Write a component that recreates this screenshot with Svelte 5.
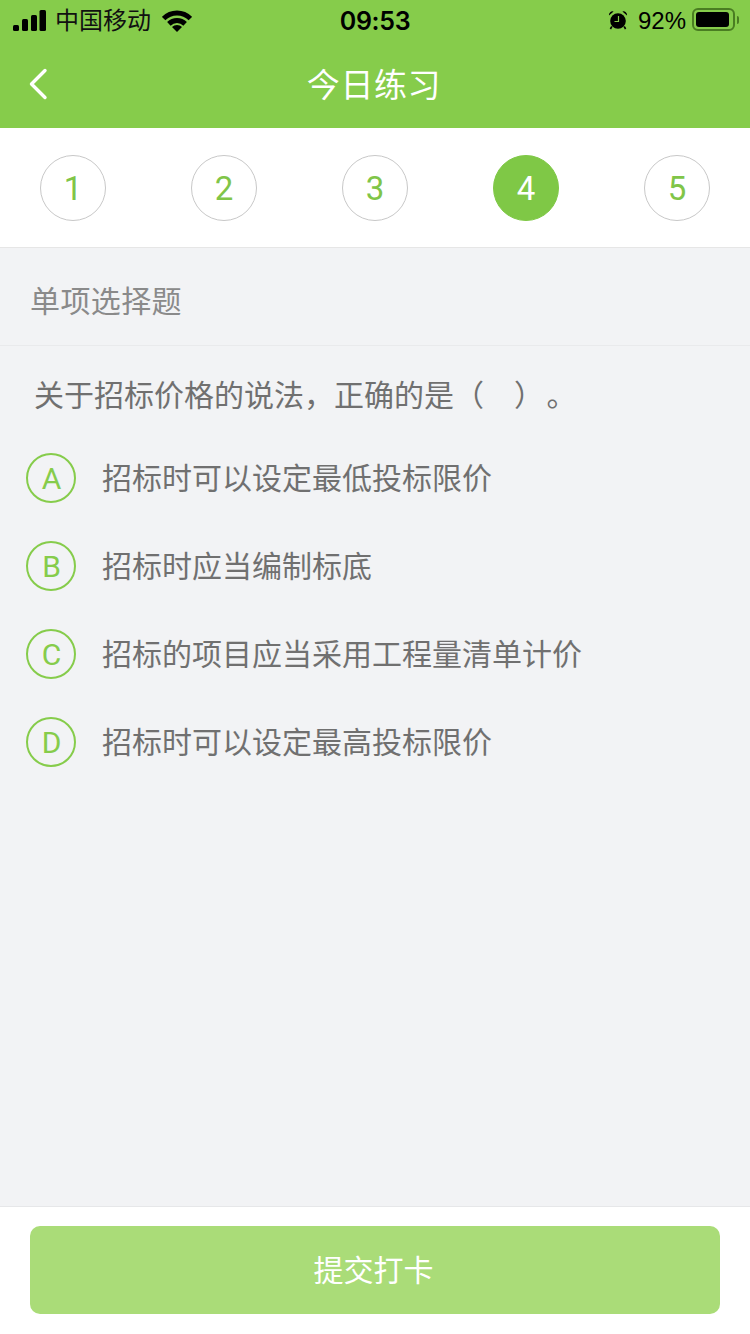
<script>
  const steps = [1, 2, 3, 4, 5];
  const current = 4;
  const options = [
    { key: 'A', text: '招标时可以设定最低投标限价' },
    { key: 'B', text: '招标时应当编制标底' },
    { key: 'C', text: '招标的项目应当采用工程量清单计价' },
    { key: 'D', text: '招标时可以设定最高投标限价' }
  ];
</script>

<div class="page">
  <header class="top">
    <div class="status">
      <div class="status-left">
        <svg class="signal" width="33" height="21" viewBox="0 0 33 21">
          <rect x="0" y="15" width="6" height="6" rx="1.5" />
          <rect x="9" y="9" width="6" height="12" rx="1.5" />
          <rect x="18" y="5" width="6" height="16" rx="1.5" />
          <rect x="26.5" y="0" width="6.5" height="21" rx="1.5" />
        </svg>
        <span class="carrier">中国移动</span>
        <svg class="wifi" width="30" height="22" viewBox="0 0 30 22">
          <path class="arc" d="M1.6 8.6A19 19 0 0 1 28.4 8.6" />
          <path class="arc" d="M6.87 13.87A11.5 11.5 0 0 1 23.13 13.87" />
          <path d="M15 22 10 17a7 7 0 0 1 10 0Z" />
        </svg>
      </div>
      <span class="time">09:53</span>
      <div class="status-right">
        <svg class="alarm" width="20" height="20" viewBox="0 0 20 20">
          <circle cx="10" cy="11" r="7.8" />
          <path d="M1 5.5a3.6 3.6 0 0 1 4.6-4ZM19 5.5a3.6 3.6 0 0 0-4.6-4Z" />
          <path d="M3.8 16.5 2.4 19M16.2 16.5l1.4 2.5" stroke="#000" stroke-width="1.6" />
          <path d="M10.5 6v5.5H6.5" fill="none" stroke="#86cc4b" stroke-width="1.2" />
        </svg>
        <span class="pct">92%</span>
        <div class="battery">
          <div class="battery-fill"></div>
        </div>
        <div class="battery-cap"></div>
      </div>
    </div>
    <div class="nav">
      <svg class="back" width="20" height="32" viewBox="0 0 20 32">
        <path d="M17 2.5 3.5 16 17 29.5" fill="none" stroke="#fff" stroke-width="3.4" stroke-linecap="round" stroke-linejoin="round" />
      </svg>
      <h1>今日练习</h1>
    </div>
  </header>

  <div class="steps">
    {#each steps as n}
      <div class="step {n === current ? 'active' : ''}">{n}</div>
    {/each}
  </div>

  <div class="type">单项选择题</div>

  <main class="question">
    <p class="stem">关于招标价格的说法，正确的是（&emsp;）&#8202;。</p>
    {#each options as opt}
      <div class="option">
        <span class="key">{opt.key}</span>
        <span class="text">{opt.text}</span>
      </div>
    {/each}
  </main>

  <footer class="bottom">
    <button class="submit">提交打卡</button>
  </footer>
</div>

<style>
  :global(body) {
    margin: 0;
    background: #f2f3f5;
  }

  .page {
    display: flex;
    flex-direction: column;
    height: 1334px;
    font-family: "Liberation Sans", "Noto Sans CJK SC", sans-serif;
    background: #f2f3f5;
    overflow: hidden;
    text-spacing-trim: space-all;
  }

  .top {
    height: 128px;
    background: #86cc4b;
    flex-shrink: 0;
  }

  .status {
    display: grid;
    grid-template-columns: 1fr auto 1fr;
    align-items: center;
    height: 41px;
    padding: 0 11px 0 13px;
    color: #000;
  }

  .status-left {
    display: flex;
    align-items: center;
  }

  .signal rect,
  .wifi path {
    fill: #000;
  }

  .wifi .arc {
    fill: none;
    stroke: #000;
    stroke-width: 5;
  }

  .carrier {
    margin-left: 9px;
    font-size: 24px;
    line-height: 40px;
    color: #111;
  }

  .wifi {
    margin-left: 11px;
  }

  .time {
    margin-left: -2px;
    font-size: 25px;
    letter-spacing: -0.3px;
    font-family: "Inter", "Liberation Sans", sans-serif;
    font-weight: 600;
  }

  .status-right {
    display: flex;
    align-items: center;
    justify-content: flex-end;
  }

  .alarm {
    fill: #000;
    margin-right: 10px;
    margin-top: -2px;
  }

  .pct {
    font-size: 24px;
    margin-right: 6px;
  }

  .battery {
    box-sizing: border-box;
    width: 43px;
    height: 23px;
    padding: 2px;
    border: 2px solid #4a7d22;
    border-radius: 6px;
    margin-top: -2px;
  }

  .battery-fill {
    width: 33px;
    height: 100%;
    background: #000;
    border-radius: 3px;
  }

  .battery-cap {
    width: 2px;
    height: 8px;
    margin-left: 2px;
    margin-top: -2px;
    background: #4a7d22;
    border-radius: 0 2px 2px 0;
  }

  .nav {
    position: relative;
    display: flex;
    align-items: center;
    justify-content: center;
    height: 89px;
    margin-top: -2px;
  }

  .back {
    position: absolute;
    left: 28px;
    top: 29px;
  }

  h1 {
    margin: 0 2px 2px 0;
    font-size: 33px;
    font-weight: 400;
    letter-spacing: 0.6px;
    color: #fff;
  }

  .steps {
    display: flex;
    justify-content: space-between;
    align-items: center;
    box-sizing: border-box;
    height: 120px;
    padding: 1px 40px 0;
    background: #fff;
    border-bottom: 1px solid #e6e6e6;
    flex-shrink: 0;
  }

  .step {
    display: flex;
    align-items: center;
    justify-content: center;
    box-sizing: border-box;
    width: 66px;
    height: 66px;
    border: 1px solid #c8c8c8;
    border-radius: 50%;
    font-family: "Roboto", "Liberation Sans", sans-serif;
    font-size: 33px;
    color: #80c548;
  }

  .step.active {
    background: #7fc846;
    border-color: #7fc846;
    color: #fff;
  }

  .type {
    box-sizing: border-box;
    height: 98px;
    padding-left: 30px;
    line-height: 108px;
    font-size: 30px;
    letter-spacing: 0.4px;
    color: #8a8a8a;
    border-bottom: 1px solid #e9eaec;
    flex-shrink: 0;
  }

  .question {
    flex: 1;
    padding: 0 26px;
  }

  .stem {
    margin: 0;
    padding-left: 8px;
    height: 88px;
    line-height: 100px;
    font-size: 30px;
    color: #707070;
  }

  .option {
    display: flex;
    align-items: center;
    height: 88px;
  }

  .key {
    display: flex;
    align-items: center;
    justify-content: center;
    box-sizing: border-box;
    width: 50px;
    height: 50px;
    padding: 0 0 0 1px;
    border: 2px solid #86cc4b;
    border-radius: 50%;
    font-family: "Roboto", "Liberation Sans", sans-serif;
    font-size: 30px;
    color: #86cc4b;
    flex-shrink: 0;
  }

  .text {
    margin: -5px 0 0 26px;
    font-size: 30px;
    color: #707070;
  }

  .bottom {
    box-sizing: border-box;
    height: 128px;
    padding: 19px 30px 0;
    background: #fff;
    border-top: 1px solid #e6e7e9;
    flex-shrink: 0;
  }

  .submit {
    display: block;
    width: 100%;
    height: 88px;
    padding: 0 3px 4px 0;
    border: none;
    border-radius: 10px;
    background: #aadc78;
    color: #fff;
    font-family: inherit;
    font-size: 30px;
  }
</style>
